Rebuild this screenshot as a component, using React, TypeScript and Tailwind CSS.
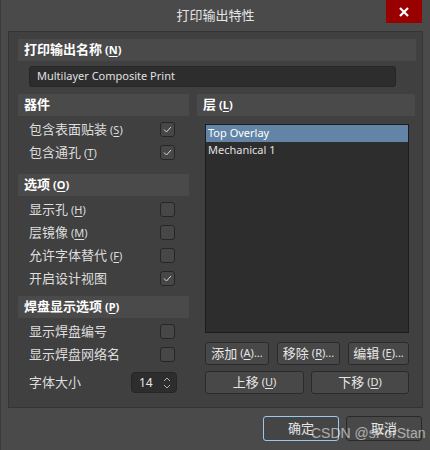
import React from 'react';

const FONT = "font-['Noto_Sans','Noto_Sans_CJK_SC',sans-serif]";

function Key({ k, bold }: { k: string; bold?: boolean }) {
  return (
    <span className={`ml-[3px] text-[11px] ${bold ? 'font-bold' : ''}`}>
      (<span className="underline underline-offset-2">{k}</span>)
    </span>
  );
}

function Header({ title, k }: { title: string; k?: string }) {
  return (
    <div className="h-[22px] bg-[#4a4a4a] flex items-center pl-[6px] text-[13px] font-bold text-white">
      <span>{title}</span>
      {k && <Key k={k} bold />}
    </div>
  );
}

function Check({ checked }: { checked?: boolean }) {
  return (
    <div className="w-[15px] h-[15px] rounded-[3px] border border-[#262626] bg-[#474747] flex items-center justify-center">
      {checked && (
        <svg width="9" height="7" viewBox="0 0 9 7" fill="none">
          <path d="M1 3.5L3.5 6L8 1" stroke="#d8d8d8" strokeWidth="1" />
        </svg>
      )}
    </div>
  );
}

function Row({ label, k, checked }: { label: string; k?: string; checked?: boolean }) {
  return (
    <div className="h-[23px] flex items-center justify-between pl-[11px] pr-[14px] text-[13px] text-[#dedede]">
      <span>
        {label}
        {k && <Key k={k} />}
      </span>
      <Check checked={checked} />
    </div>
  );
}

function Btn({ label, k, w, dots }: { label: string; k: string; w: string; dots?: boolean }) {
  return (
    <div
      className={`${w} h-[23px] rounded-[3px] border border-[#2a2a2a] bg-[#484848] flex items-center justify-center text-[13px] text-[#e6e6e6]`}
    >
      {label}
      <Key k={k} />
      {dots && <span className="text-[11px]">...</span>}
    </div>
  );
}

export default function App() {
  return (
    <div className={`${FONT} relative w-[430px] h-[450px] bg-[#4a4a4a] border-l border-[#3a3a3a] overflow-hidden`}>
      {/* title bar */}
      <div className="h-[31px] flex items-center justify-center text-[13px] text-[#e6e6e6]">打印输出特性</div>
      <div className="absolute top-0 right-[8px] w-[36px] h-[23px] bg-[#990000] flex items-center justify-center">
        <svg width="10" height="10" viewBox="0 0 10 10">
          <path d="M1 1L9 9M9 1L1 9" stroke="white" strokeWidth="2.2" />
        </svg>
      </div>

      {/* main panel */}
      <div className="ml-[7px] w-[415px] h-[377px] bg-[#404040] border border-[#343434] pl-[9px] pr-[6px] pt-[7px]">
        <Header title="打印输出名称" k="N" />
        <div className="mt-[5px] ml-[11px] w-[367px] h-[21px] rounded-[3px] bg-[#2d2d2d] border border-[#262626] flex items-center pl-[7px] text-[11px] text-[#e0e0e0]">
          Multilayer Composite Print
        </div>

        <div className="mt-[7px] flex gap-[8px]">
          {/* left column */}
          <div className="w-[171px]">
            <Header title="器件" />
            <div className="mt-[2px]">
              <Row label="包含表面贴装" k="S" checked />
              <Row label="包含通孔" k="T" checked />
            </div>
            <div className="mt-[10px]">
              <Header title="选项" k="O" />
            </div>
            <div className="mt-[2px]">
              <Row label="显示孔" k="H" />
              <Row label="层镜像" k="M" />
              <Row label="允许字体替代" k="F" />
              <Row label="开启设计视图" checked />
            </div>
            <div className="mt-[6px]">
              <Header title="焊盘显示选项" k="P" />
            </div>
            <div className="mt-[2px]">
              <Row label="显示焊盘编号" />
              <Row label="显示焊盘网络名" />
            </div>
            <div className="mt-[5px] h-[23px] flex items-center justify-between pl-[11px] pr-[12px] text-[13px] text-[#dedede]">
              <span>字体大小</span>
              <div className="w-[46px] h-[21px] rounded-[4px] bg-[#2d2d2d] border border-[#262626] flex items-center justify-between pl-[7px] pr-[5px] text-[12px] text-[#e6e6e6]">
                <span>14</span>
                <svg width="8" height="14" viewBox="0 0 8 14" fill="none">
                  <path d="M1 5L4 2L7 5M1 9L4 12L7 9" stroke="#b0b0b0" strokeWidth="1" />
                </svg>
              </div>
            </div>
          </div>

          {/* right column */}
          <div className="w-[218px]">
            <Header title="层" k="L" />
            <div className="mt-[8px] ml-[8px] w-[204px] h-[209px] bg-[#2d2d2d] border border-[#1c1c1c] text-[11px]">
              <div className="h-[17px] bg-[#6284a6] flex items-center pl-[2px] text-white">Top Overlay</div>
              <div className="h-[17px] flex items-center pl-[2px] text-[#e0e0e0]">Mechanical 1</div>
            </div>
            <div className="mt-[9px] ml-[8px] flex gap-[8px]">
              <Btn label="添加" k="A" w="w-[64px]" dots />
              <Btn label="移除" k="R" w="w-[63px]" dots />
              <Btn label="编辑" k="E" w="w-[61px]" dots />
            </div>
            <div className="mt-[6px] ml-[8px] flex gap-[7px]">
              <Btn label="上移" k="U" w="w-[99px]" />
              <Btn label="下移" k="D" w="w-[98px]" />
            </div>
          </div>
        </div>
      </div>

      {/* footer */}
      <div className="mt-[8px] flex justify-end gap-[7px] pr-[8px] text-[13px] text-[#e6e6e6]">
        <div className="w-[76px] h-[25px] rounded-[3px] border border-[#9cc8ee] bg-[#454545] flex items-center justify-center">确定</div>
        <div className="w-[76px] h-[25px] rounded-[3px] border border-[#2a2a2a] bg-[#484848] flex items-center justify-center">取消</div>
      </div>

      <div className="absolute left-[310px] top-[423px] text-[14px] font-['Liberation_Sans',sans-serif] text-white/55 pointer-events-none">
        CSDN @sForStan
      </div>
    </div>
  );
}
